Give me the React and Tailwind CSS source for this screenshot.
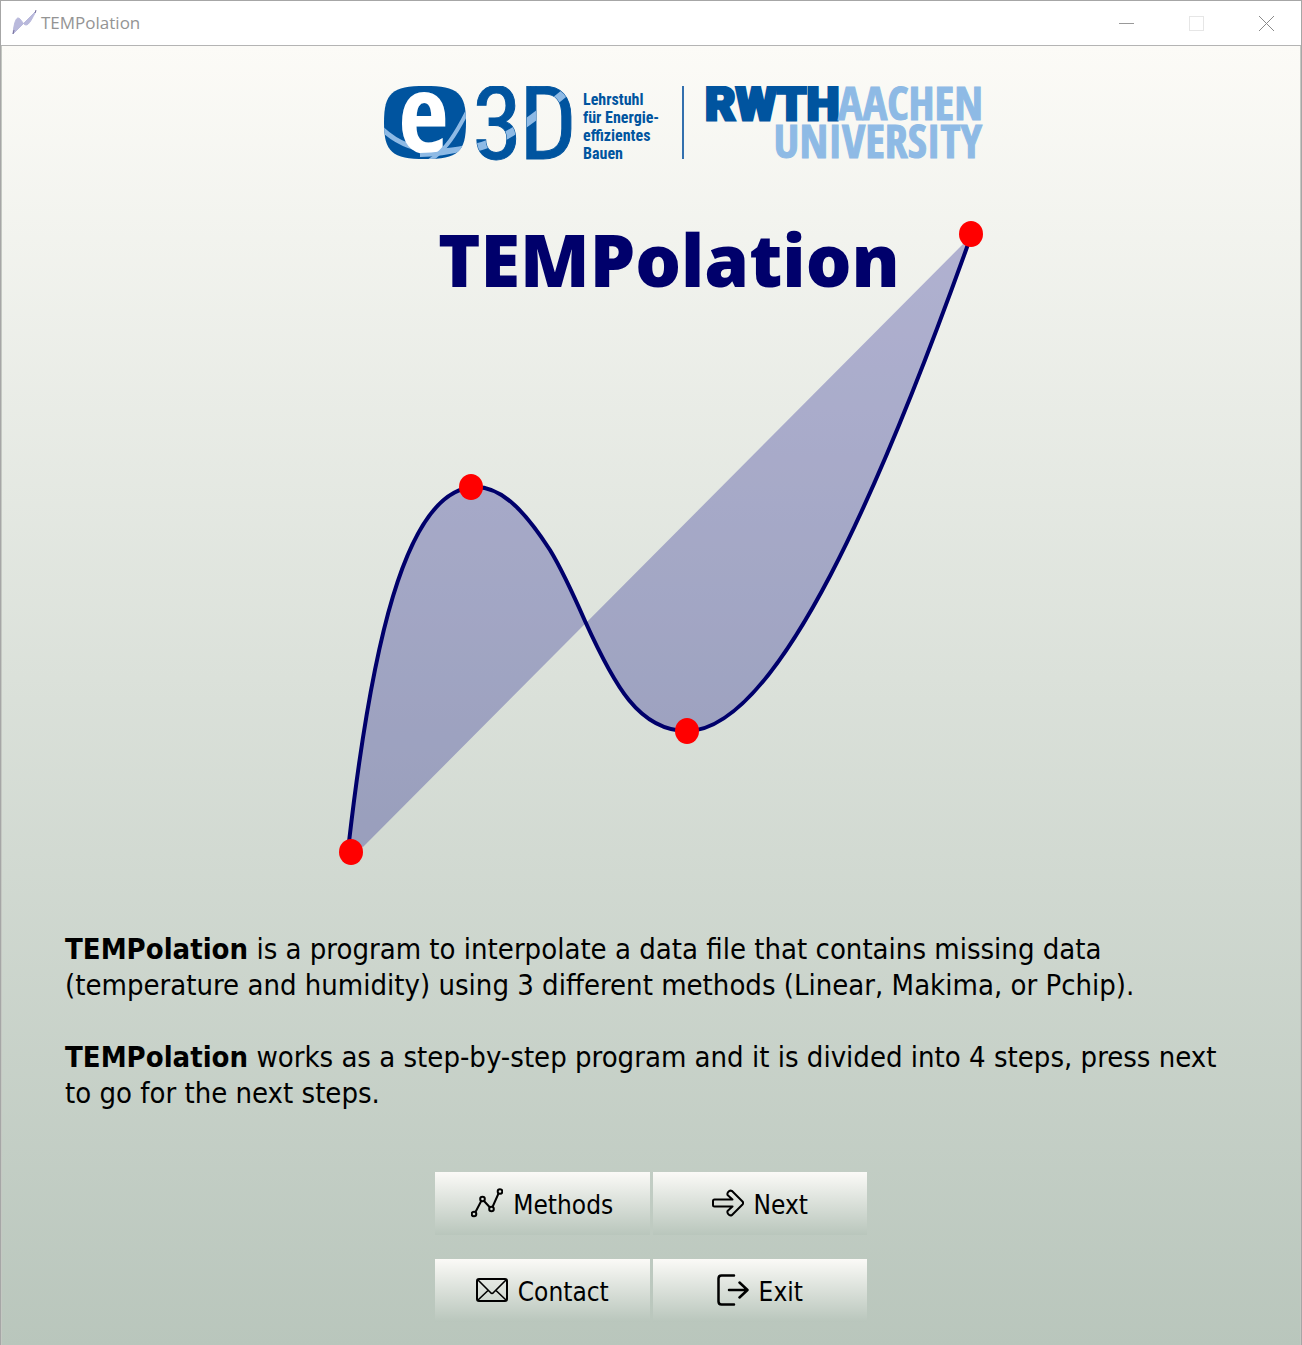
const CURVE =
  'M10 622 C31 440 64 267 137 267 C165 267 189 296 211 330 C222 348 235 376 246 401 C275 465 300 511 348 511 C439 511 545 260 632 16';

const POINTS = [
  [12, 632],
  [132, 267],
  [348, 511],
  [632, 14],
];

function AppIcon() {
  return (
    <svg viewBox="0 0 26 26" className="h-[26px] w-[26px]" aria-hidden="true">
      <path d="M2 24 C3 13 5 8 7 8 C10 8 12 15 15 15 C18 15 21 9 25 1 L2 24Z" fill="#b9b9dc" stroke="#b9b9dc" />
      <path d="M2 24 L3 20 M24 3 L25 0" stroke="#77709c" strokeWidth="1" />
    </svg>
  );
}

function TitleBar() {
  return (
    <header className="flex h-[45px] items-center border-b border-[#b4b4b4] bg-white pl-[10px]">
      <AppIcon />
      <span className="ml-1 font-['Open_Sans',sans-serif] text-[17px] leading-6 text-[#949494]">TEMPolation</span>
      <div className="ml-auto flex self-stretch">
        <button type="button" aria-label="Minimize" className="flex w-[70px] items-center justify-center">
          <svg viewBox="0 0 15 15" className="h-[15px] w-[15px]" aria-hidden="true">
            <path d="M0 7.5H15" stroke="#999" />
          </svg>
        </button>
        <button type="button" aria-label="Maximize" disabled className="flex w-[70px] items-center justify-center">
          <svg viewBox="0 0 15 15" className="h-[15px] w-[15px]" aria-hidden="true">
            <rect x="0.5" y="0.5" width="14" height="14" fill="none" stroke="#e6e6e6" />
          </svg>
        </button>
        <button type="button" aria-label="Close" className="flex w-[70px] items-center justify-center">
          <svg viewBox="0 0 15 15" className="h-[15px] w-[15px]" aria-hidden="true">
            <path d="M0 0L15 15M15 0L0 15" stroke="#8a8a8a" />
          </svg>
        </button>
      </div>
    </header>
  );
}

function Logo() {
  return (
    <svg viewBox="0 0 600 76" className="w-[600px] max-w-full" role="img" aria-label="e3D, RWTH Aachen University">
      <defs>
        <clipPath id="badge">
          <path d="M41 0C74 0 82 7 82 36.500C82 66 74 73 41 73C8 73 0 66 0 36.500C0 7 8 0 41 0Z" />
        </clipPath>
        <clipPath id="digits">
          <text x="88" y="73" className="font-['Roboto_Condensed',sans-serif] text-[102px] font-normal">3</text>
          <text x="135" y="73" className="font-['Roboto_Condensed',sans-serif] text-[102px] font-normal">D</text>
        </clipPath>
      </defs>
      <g clipPath="url(#badge)">
        <rect width="82" height="73" fill="#00549f" />
        <path d="M-2 43C14 58 40 72 84 61" fill="none" stroke="#8ebae5" strokeWidth="5" />
        <text x="14" y="67" className="font-['Open_Sans_Condensed',sans-serif] text-[110px] font-bold" fill="#fff">e</text>
        <path d="M45 75C62 64 72 48 84 24" fill="none" stroke="#8ebae5" strokeWidth="4" />
        <path d="M36 69C52 69 66 67 84 62" fill="none" stroke="#8ebae5" strokeWidth="4" />
      </g>
      <g className="font-['Roboto_Condensed',sans-serif] text-[102px] font-normal" fill="#00549f" stroke="#00549f" strokeWidth="1">
        <text x="88" y="73">3</text>
        <text x="135" y="73">D</text>
      </g>
      <path d="M86 63C122 56 150 32 188 1" fill="none" stroke="#8ebae5" strokeWidth="8" clipPath="url(#digits)" />
      <g className="font-['Roboto_Condensed',sans-serif] text-[16px] font-bold" fill="#00549f">
        <text x="199" y="19">Lehrstuhl</text>
        <text x="199" y="37">für Energie-</text>
        <text x="199" y="55">effizientes</text>
        <text x="199" y="73">Bauen</text>
      </g>
      <rect x="298" y="0" width="2" height="73" fill="#3370ae" />
      <text x="321" y="34" className="font-['Roboto',sans-serif] text-[47px] font-black" fill="#00549f" stroke="#00549f" strokeWidth="3">RWTH</text>
      <g className="font-['Open_Sans_Condensed',sans-serif] text-[46px] font-bold" fill="#8ebae5" stroke="#8ebae5" strokeWidth="1" textAnchor="end">
        <text x="599" y="34">AACHEN</text>
        <text x="598" y="72">UNIVERSITY</text>
      </g>
    </svg>
  );
}

function Hero() {
  return (
    <div className="grid w-full">
      <svg viewBox="0 0 645 646" className="col-start-1 row-start-1 w-full" role="img" aria-label="Interpolated curve through four points">
        <path d={CURVE + ' L24 627 Z'} fill="#000080" fillOpacity="0.27" />
        <path d={CURVE} fill="none" stroke="#00006b" strokeWidth="4" />
        {POINTS.map(([x, y]) => (
          <ellipse key={x} cx={x} cy={y} rx="12" ry="13" fill="#ff0000" />
        ))}
      </svg>
      <h1 className="col-start-1 row-start-1 pl-[99px] font-['Open_Sans',sans-serif] text-[72px] leading-[78px] font-extrabold text-[#00006b]">
        TEMPolation
      </h1>
    </div>
  );
}

function MethodsIcon() {
  return (
    <svg viewBox="0 0 32 32" className="h-8 w-8" fill="none" stroke="#000" strokeWidth="2" aria-hidden="true">
      <path d="M4.500 25L10.500 13.500M13 14L19 20.500M21.500 20L27.500 6.500" />
      <circle cx="3" cy="27" r="2.300" />
      <circle cx="11.500" cy="12" r="2.300" />
      <circle cx="20.500" cy="22" r="2.300" />
      <circle cx="29" cy="4.500" r="2.300" />
    </svg>
  );
}

function NextIcon() {
  return (
    <svg viewBox="0 0 32 32" className="h-8 w-8" fill="none" stroke="#000" strokeWidth="2" strokeLinejoin="round" aria-hidden="true">
      <path d="M2.500 12.500H20.500L15.800 8.300C14.500 6.500 17 2.500 20 4L30.500 14.500C31.300 15.400 31.300 16.600 30.500 17.500L20 28C17 29.500 14.500 25.500 15.800 23.700L20.500 19.500H2.500C1.500 19.500 1 19 1 18V14C1 13 1.500 12.500 2.500 12.500Z" />
    </svg>
  );
}

function MailIcon() {
  return (
    <svg viewBox="0 0 32 32" className="h-8 w-8" fill="none" stroke="#000" strokeWidth="2" strokeLinejoin="round" aria-hidden="true">
      <rect x="1" y="5" width="30" height="22" rx="2" />
      <path d="M2 6L14.500 18.500Q16 20.500 17.500 18.500L30 6M2 26L12 16.500M30 26L20 16.500" strokeWidth="1.600" />
    </svg>
  );
}

function ExitIcon() {
  return (
    <svg viewBox="0 0 32 32" className="h-8 w-8" fill="none" stroke="#000" strokeWidth="2.500" strokeLinecap="round" strokeLinejoin="round" aria-hidden="true">
      <path d="M17 1.500H4.500Q1.500 1.500 1.500 4.500V27.500Q1.500 30.500 4.500 30.500H17M12 16H30M22.500 8.500L30.500 16L22.500 23.500" />
    </svg>
  );
}

const ACTIONS = [
  ['Methods', MethodsIcon],
  ['Next', NextIcon],
  ['Contact', MailIcon],
  ['Exit', ExitIcon],
];

export default function App() {
  return (
    <div className="flex min-h-screen flex-col border-t border-r border-l border-[#a6a6a6] font-['DejaVu_Sans_Condensed','DejaVu_Sans',sans-serif] text-black">
      <TitleBar />
      <main className="flex grow flex-col items-center border-r border-l border-[#c4c8c2] bg-linear-to-b from-[#fcfbf7] to-[#b9c6bc] pt-10 pb-6">
        <div className="w-full max-w-[666px] pl-[21px]">
          <div className="pl-[45px]">
            <Logo />
          </div>
          <div className="mt-[58px]">
            <Hero />
          </div>
        </div>
        <div className="mt-[65px] w-full space-y-9 pr-14 pl-[63px] text-[29px] leading-9">
          <p>
            <strong>TEMPolation</strong> is a program to interpolate a data file that contains missing data (temperature
            and humidity) using 3 different methods (Linear, Makima, or Pchip).
          </p>
          <p>
            <strong>TEMPolation</strong> works as a step-by-step program and it is divided into 4 steps, press next to go
            for the next steps.
          </p>
        </div>
        <nav className="mt-[61px] grid w-full max-w-[432px] grid-cols-2 gap-x-[3px] gap-y-6">
          {ACTIONS.map(([label, Icon]) => (
            <button
              key={label}
              type="button"
              className="flex h-[63px] items-center justify-center gap-2.5 bg-linear-to-b from-[#fbfaf7] to-[#b9c6bc] pb-0.5 text-[26px] leading-8"
            >
              <Icon />
              <span className="pt-1">{label}</span>
            </button>
          ))}
        </nav>
      </main>
    </div>
  );
}
